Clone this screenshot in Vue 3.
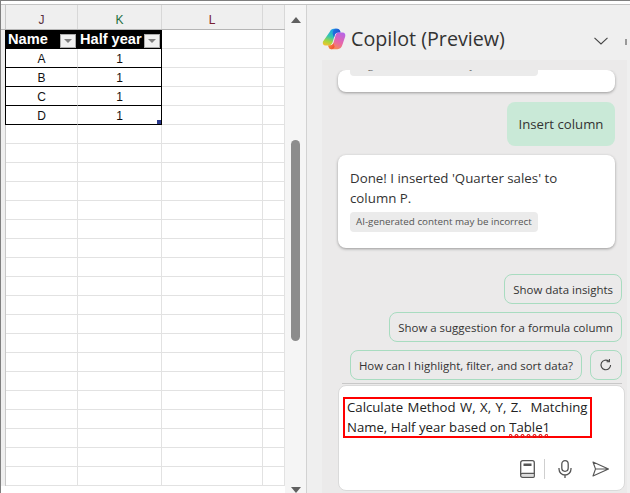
<script setup>
const rows = [
  { name: 'A', val: 1 },
  { name: 'B', val: 1 },
  { name: 'C', val: 1 },
  { name: 'D', val: 1 },
]
const emptyRows = Array.from({ length: 19 }, (_, i) => i)
</script>

<template>
  <div class="screen">
    <div class="frame">
      <section class="sheet">
        <div class="col-heads">
          <div class="gutter"></div>
          <div class="ch j">J</div>
          <div class="ch k">K</div>
          <div class="ch l">L</div>
          <div class="ch m"></div>
        </div>
        <div class="grid-row tbl-head">
          <div class="gutter blk"></div>
          <div class="c j th">Name<span class="filter"><i></i></span></div>
          <div class="c k th">Half year<span class="filter"><i></i></span></div>
          <div class="c l"></div>
          <div class="c m"></div>
        </div>
        <div v-for="(r, i) in rows" :key="r.name" class="grid-row">
          <div class="gutter blk"></div>
          <div class="c j td">{{ r.name }}</div>
          <div class="c k td">{{ r.val }}<b v-if="i === rows.length - 1" class="handle"></b></div>
          <div class="c l"></div>
          <div class="c m"></div>
        </div>
        <div v-for="n in emptyRows" :key="n" class="grid-row">
          <div class="gutter"></div>
          <div class="c j"></div>
          <div class="c k"></div>
          <div class="c l"></div>
          <div class="c m"></div>
        </div>
      </section>

      <div class="scrollbar">
        <span class="arrow up"></span>
        <div class="thumb"></div>
        <span class="arrow down"></span>
      </div>

      <aside class="pane">
        <header class="pane-head">
          <svg class="logo" width="24" height="24" viewBox="0 0 24 24">
            <defs>
              <linearGradient id="ga" x1="0.5" y1="0" x2="0.2" y2="1">
                <stop offset="0" stop-color="#1f9fe8" />
                <stop offset="0.45" stop-color="#34c7b0" />
                <stop offset="0.75" stop-color="#a8d63c" />
                <stop offset="1" stop-color="#f2c230" />
              </linearGradient>
              <linearGradient id="gb" x1="0.8" y1="0" x2="0.3" y2="1">
                <stop offset="0" stop-color="#b565e8" />
                <stop offset="0.55" stop-color="#e866a8" />
                <stop offset="1" stop-color="#f7904a" />
              </linearGradient>
              <linearGradient id="gc" x1="0" y1="0" x2="1" y2="0.6">
                <stop offset="0" stop-color="#1a7fe6" />
                <stop offset="1" stop-color="#2a45c8" />
              </linearGradient>
              <linearGradient id="gd" x1="0" y1="0" x2="1" y2="0.6">
                <stop offset="0" stop-color="#f8a030" />
                <stop offset="1" stop-color="#f04a3a" />
              </linearGradient>
            </defs>
            <path d="M8 4.5 C8.8 2.6 10 1.8 12 1.8 H15 C17 1.8 18 3 18.5 5.5 H16 C14.2 5.5 13.3 6.3 12.7 8.2 L10.5 15.5 C9.7 17.6 8.5 18.5 6.5 18.5 H3.5 C1.2 18.5 0.3 16.6 1 14.5 Z" fill="url(#ga)" />
            <path d="M13 1.8 H15 C17 1.8 18 3 18.5 5.5 H16 C14.2 5.5 13.3 6.3 12.7 8.2 L11.9 10.8 L10.6 6.5 C10.9 3.4 11.8 2.2 13 1.8 Z" fill="url(#gc)" />
            <path d="M16.5 5.5 H20.5 C22.8 5.5 23.8 7.4 23.2 9.5 L20.5 17.5 C19.7 20.3 18 22.2 15.5 22.2 H9.5 C7.6 22.2 6.6 20.8 6.3 18.5 H8 C9.8 18.5 10.9 17.5 11.4 16 L13.6 8.2 C14.1 6.5 15 5.5 16.5 5.5 Z" fill="url(#gb)" />
            <path d="M6.3 18.5 H8 C9.8 18.5 10.9 17.5 11.4 16 L12.6 19.8 C12.2 21 11 22.2 9.5 22.2 C7.6 22.2 6.6 20.8 6.3 18.5 Z" fill="url(#gd)" />
          </svg>
          <h1 class="title">Copilot (Preview)</h1>
          <svg class="chev" width="14" height="8" viewBox="0 0 14 8"><path d="M0.5 0.8 L7 7 L13.5 0.8" fill="none" stroke="#444" stroke-width="1.1" /></svg>
          <span class="close-stub"></span>
        </header>

        <div class="chat">
          <div class="scroll">
            <div class="card first">
              <span class="note">AI-generated content may be incorrect</span>
            </div>
            <div class="user-row"><div class="bubble">Insert column</div></div>
            <div class="card second">
              <p>Done! I inserted 'Quarter sales' to column P.</p>
              <span class="note">AI-generated content may be incorrect</span>
            </div>
          </div>

          <div class="suggest">
            <button class="pill">Show data insights</button>
            <button class="pill">Show a suggestion for a formula column</button>
            <div class="pill-row">
              <button class="pill">How can I highlight, filter, and sort data?</button>
              <button class="pill refresh" aria-label="Refresh">
                <svg width="14" height="14" viewBox="0 0 14 14"><path d="M11.6 7 A4.8 4.8 0 1 1 9.8 3.2" fill="none" stroke="#444" stroke-width="1.1" /><path d="M10.4 1 V3.8 H7.6" fill="none" stroke="#444" stroke-width="1.1" /></svg>
              </button>
            </div>
          </div>

          <div class="rule"></div>

          <div class="composer">
            <div class="highlight">
              Calculate Method W, X, Y, Z.&nbsp; Matching Name, Half year based on <span class="squiggle">Table1<svg class="wave" width="39" height="4" viewBox="0 0 39 4"><path d="M0 2 Q1.5 -1 3 2 T6 2 T9 2 T12 2 T15 2 T18 2 T21 2 T24 2 T27 2 T30 2 T33 2 T36 2 T39 2" fill="none" stroke="#e02020" stroke-width="1.2" /></svg></span>
            </div>
            <div class="tools">
              <svg width="15" height="18" viewBox="0 0 15 18"><path d="M0.7 2.7 A2 2 0 0 1 2.7 0.7 H12.3 A2 2 0 0 1 14.3 2.7 V16.3 A1 1 0 0 1 13.3 17.3 H2.7 A2 2 0 0 1 0.7 15.3 Z" fill="none" stroke="#555" stroke-width="1.3" /><path d="M0.7 14.8 A1.5 1.5 0 0 1 2.2 13.3 H14.3" fill="none" stroke="#555" stroke-width="1.3" /><rect x="3.5" y="3.5" width="8" height="2.5" fill="#555" /><rect x="1.5" y="13.9" width="12" height="2.8" fill="#bbb" opacity=".5" /></svg>
              <span class="sep"></span>
              <svg width="14" height="18" viewBox="0 0 14 18"><rect x="3.8" y="0.7" width="6.4" height="10.6" rx="3.2" fill="none" stroke="#555" stroke-width="1.3" /><path d="M1 8 V9 A6 6 0 0 0 13 9 V8 M7 15 V18" fill="none" stroke="#555" stroke-width="1.3" /></svg>
              <svg class="send" width="17" height="16" viewBox="0 0 17 16"><path d="M1 1 L16.5 8 L1 15 L3.5 8 Z M3.5 8 H16.5" fill="none" stroke="#555" stroke-width="1.1" stroke-linejoin="round" /></svg>
            </div>
          </div>
        </div>
      </aside>
    </div>
  </div>
</template>

<style scoped>
.screen {
  width: 630px;
  height: 493px;
  overflow: hidden;
  box-sizing: border-box;
  background: #fff;
  border-top: 1px solid #7f7f7f;
  border-left: 1px solid #7f7f7f;
  padding-top: 3px;
  font-family: "Open Sans", "Noto Sans", sans-serif;
}
.frame {
  display: flex;
  height: 489px;
  border-top: 1px solid #c4c4c4;
}
.sheet {
  width: 284px;
  flex: none;
  overflow: hidden;
  font-family: "Liberation Sans", Arial, sans-serif;
}
.col-heads,
.grid-row {
  display: flex;
}
.col-heads {
  height: 25px;
  background: #efefef;
  border-bottom: 1px solid #b5b5b5;
  box-sizing: border-box;
}
.grid-row {
  height: 19px;
}
.gutter {
  width: 5px;
  flex: none;
  background: #efefef;
  border-right: 1px solid #c8c8c8;
  box-sizing: border-box;
}
.gutter.blk {
  border-right-color: #000;
}
.j { width: 72px; flex: none; }
.k { width: 84px; flex: none; }
.l { width: 101px; flex: none; }
.m { width: 22px; flex: none; }
.ch {
  box-sizing: border-box;
  border-right: 1px solid #d8d8d8;
  font-size: 12px;
  line-height: 31px;
  text-align: center;
  color: #444;
}
.ch.k { color: #1f6f3f; }
.ch.l { color: #7a2030; }
.ch.j { color: #5a3040; }
.c {
  box-sizing: border-box;
  border-right: 1px solid #e2e2e2;
  border-bottom: 1px solid #e2e2e2;
  position: relative;
}
.th {
  background: #000;
  color: #fff;
  font-weight: 700;
  font-size: 14.6px;
  line-height: 18px;
  padding: 1px 0 0 2px;
  border-color: #000;
  display: flex;
  align-items: flex-end;
  justify-content: space-between;
  white-space: nowrap;
}
.filter {
  width: 16px;
  height: 14px;
  flex: none;
  background: #f0f0f0;
  border: 1px solid #ababab;
  box-sizing: border-box;
  display: flex;
  align-items: center;
  justify-content: center;
  margin-right: 1px;
}
.filter i {
  width: 0;
  height: 0;
  border-left: 4px solid transparent;
  border-right: 4px solid transparent;
  border-top: 4px solid #808080;
}
.td {
  font-size: 12px;
  line-height: 21px;
  text-align: center;
  color: #111;
  border-bottom: 1px solid #000;
}
.td.k { border-right: 1px solid #000; }
.handle {
  position: absolute;
  right: 0;
  bottom: 0;
  width: 4px;
  height: 4px;
  background: #2b3a8c;
}
.scrollbar {
  width: 22px;
  flex: none;
  background: #f5f5f5;
  border-right: 1px solid #d2d2d2;
  box-sizing: border-box;
  display: flex;
  flex-direction: column;
  align-items: center;
  padding-top: 12px;
}
.arrow {
  width: 0;
  height: 0;
  flex: none;
  border-left: 5px solid transparent;
  border-right: 5px solid transparent;
}
.arrow.up { border-bottom: 6px solid #606060; margin-bottom: 117px; }
.arrow.down { border-top: 6px solid #606060; margin-top: 146px; }
.thumb {
  width: 9px;
  height: 201px;
  flex: none;
  background: #8c8c8c;
  border-radius: 5px;
}
.pane {
  flex: 1;
  min-width: 0;
  background: #efefef;
  display: flex;
  flex-direction: column;
  padding-left: 15px;
  overflow: hidden;
}
.pane-head {
  height: 55px;
  flex: none;
  display: flex;
  align-items: flex-start;
  position: relative;
  padding-top: 22px;
  box-sizing: border-box;
}
.logo {
  flex: none;
  margin-right: 5px;
}
.title {
  margin: -1px 0 0;
  font-size: 19.7px;
  font-weight: 400;
  line-height: 26px;
  color: #333;
}
.chev {
  position: absolute;
  left: 272px;
  top: 32px;
}
.close-stub {
  position: absolute;
  left: 303px;
  top: 34px;
  width: 2px;
  height: 6px;
  background: #999;
}
.chat {
  flex: 1;
  min-height: 0;
  margin-right: 3px;
  background: #ebeaea;
  display: flex;
  flex-direction: column;
  padding-top: 10px;
  overflow: hidden;
}
.scroll {
  height: 192px;
  overflow: hidden;
  flex: none;
  padding: 0 12px 0 16px;
  box-sizing: border-box;
}
.card {
  background: #fff;
  border-radius: 8px;
  box-shadow: 0 1px 3px rgba(0, 0, 0, 0.35);
  padding: 0 12px;
}
.card.first {
  height: 22px;
  overflow: hidden;
}
.card.first .note {
  margin-top: -14px;
}
.card.second {
  height: 93px;
  box-sizing: border-box;
  padding-top: 13px;
}
.card p {
  margin: 0 0 4px;
  font-size: 13.3px;
  line-height: 20px;
  color: #333;
}
.note {
  display: inline-block;
  height: 20px;
  line-height: 20px;
  padding: 0 6px;
  font-size: 9.8px;
  background: #ebebeb;
  color: #555;
  border-radius: 4px;
  white-space: nowrap;
  vertical-align: top;
}
.user-row {
  display: flex;
  justify-content: flex-end;
  margin: 10px 0 9px;
}
.bubble {
  width: 108px;
  height: 44px;
  background: #c9e9d7;
  border-radius: 8px;
  font-size: 13.2px;
  line-height: 44px;
  text-align: center;
  color: #333;
}
.suggest {
  height: 118px;
  flex: none;
  padding: 12px 5px 0 0;
  box-sizing: border-box;
  display: flex;
  flex-direction: column;
  align-items: flex-end;
  gap: 8px;
}
.pill-row {
  display: flex;
  gap: 8px;
  flex: none;
}
.pill {
  height: 30px;
  flex: none;
  box-sizing: border-box;
  border: 1px solid #a8dcc0;
  border-radius: 8px;
  background: #ebeaea;
  padding: 0 8px;
  font: inherit;
  font-size: 11.45px;
  color: #333;
  white-space: nowrap;
}
.refresh {
  width: 32px;
  padding: 0;
  display: flex;
  align-items: center;
  justify-content: center;
}
.rule {
  height: 1px;
  background: #c8c8c8;
  margin: 3px 5px 0 20px;
  flex: none;
}
.composer {
  margin: 1px 2px 0 16px;
  height: 106px;
  flex: none;
  background: #fff;
  border: 1px solid #dadada;
  border-radius: 8px;
  box-sizing: border-box;
  position: relative;
  padding: 11px 32px 0 4px;
}
.highlight {
  outline: 2px solid #f00;
  outline-offset: -2px;
  width: 249px;
  height: 41px;
  box-sizing: border-box;
  padding: 0 4px;
  font-size: 13.2px;
  line-height: 20px;
  color: #222;
}
.highlight::first-line {
  word-spacing: 1px;
}
.squiggle {
  position: relative;
  display: inline-block;
}
.wave {
  position: absolute;
  left: 0;
  bottom: -1px;
}
.tools {
  position: absolute;
  right: 15px;
  bottom: 11px;
  display: flex;
  align-items: center;
}
.sep {
  width: 1px;
  height: 20px;
  background: #cfcfcf;
  margin: 0 13px 0 9px;
}
.send {
  margin-left: 20px;
}
</style>

<style>
html, body { margin: 0; padding: 0; background: #fff; overflow: hidden; }
</style>
